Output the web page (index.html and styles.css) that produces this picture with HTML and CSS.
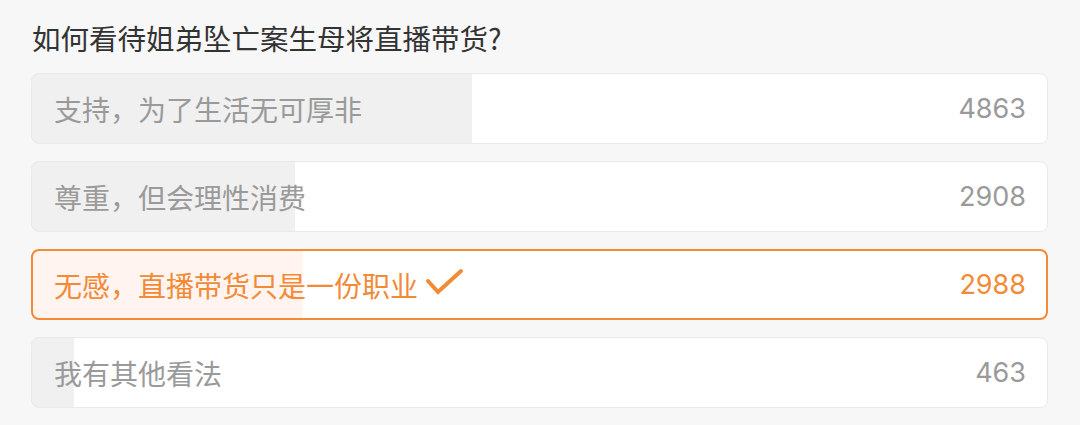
FILE: index.html
```html
<!DOCTYPE html>
<html lang="zh-CN">
<head>
  <meta charset="UTF-8">
  <title>投票</title>
  <link rel="stylesheet" href="styles.css">
</head>
<body>
  <div class="poll">
    <h1 class="poll-title">如何看待姐弟坠亡案生母将直播带货?</h1>

    <div class="option" style="--pct: 43.33%">
      <span class="option-text">支持，为了生活无可厚非</span>
      <span class="option-count">4863</span>
    </div>
    <div class="option" style="--pct: 25.91%">
      <span class="option-text">尊重，但会理性消费</span>
      <span class="option-count">2908</span>
    </div>
    <div class="option option-selected" style="--pct: 26.63%">
      <span class="option-text">无感，直播带货只是一份职业
        <svg class="check" width="40" height="30" viewBox="0 0 40 30">
          <path d="M3 13 L13 24 L36 3" fill="none" stroke="#f28a36" stroke-width="4" stroke-linecap="round" stroke-linejoin="miter"/>
        </svg>
      </span>
      <span class="option-count">2988</span>
    </div>
    <div class="option" style="--pct: 4.13%">
      <span class="option-text">我有其他看法</span>
      <span class="option-count">463</span>
    </div>
  </div>
</body>
</html>
```

FILE: styles.css
```css
body {
  margin: 0;
  background-color: #f7f7f7;
  font-family: "Noto Sans CJK SC", "Noto Sans", sans-serif;
}

.poll {
  padding: 18px 32px 0 31px;
}

.poll-title {
  margin: 0 0 15px 1px;
  font-size: 28.5px;
  font-weight: normal;
  line-height: 40px;
  color: #333;
}

.option {
  --fill: #f0f0f0;
  box-sizing: border-box;
  height: 71px;
  margin-bottom: 17px;
  padding: 0 21px 0 22px;
  display: flex;
  align-items: center;
  justify-content: space-between;
  border: 1px solid #e9e9e9;
  border-radius: 8px;
  background: linear-gradient(to right, var(--fill) var(--pct), #fff var(--pct));
  color: #9a9a9a;
}

.option-text {
  display: flex;
  align-items: center;
  font-size: 28px;
  line-height: 40px;
}

.option-count {
  font-family: "Inter", "Noto Sans", sans-serif;
  font-size: 27px;
}

.option-selected {
  --fill: #fff4f0;
  padding-left: 21px;
  padding-right: 20px;
  border: 2px solid #f28a36;
  color: #f28a36;
}

.check {
  margin-left: 7px;
  margin-top: -4px;
}
```
